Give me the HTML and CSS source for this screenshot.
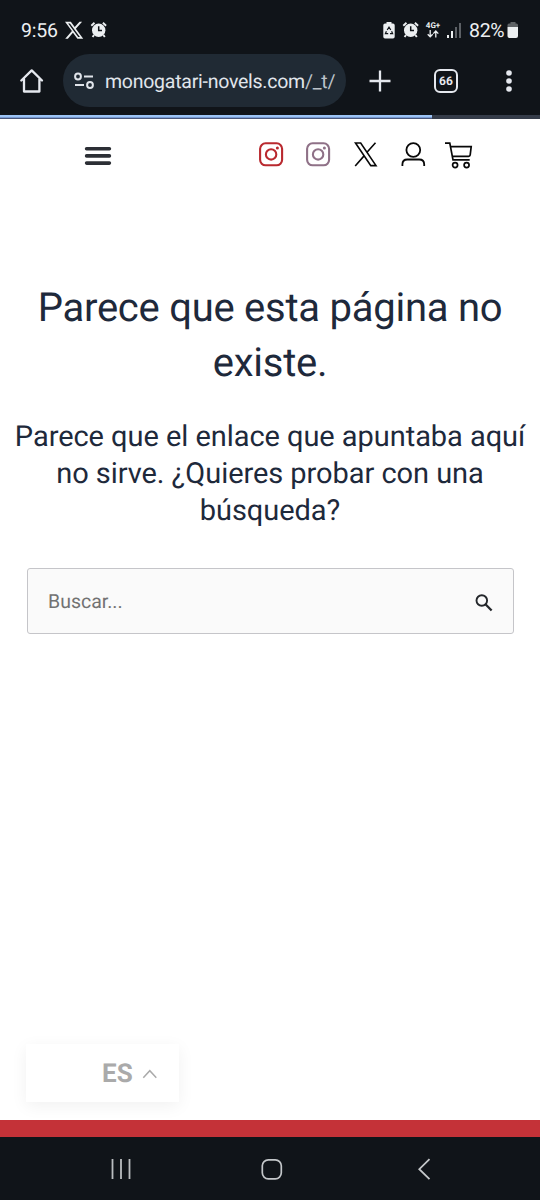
FILE: index.html
```html
<!DOCTYPE html>
<html lang="es">
<head>
<meta charset="utf-8">
<title>Monogatari Novels</title>
<link rel="stylesheet" href="styles.css">
</head>
<body>
<div class="screen">
  <header class="chrome">
    <div class="status">
      <span class="time">9:56</span>
      <svg class="st-x" width="18" height="18" viewBox="0 0 24 24"><path fill="#eceff1" fill-rule="evenodd" d="M0 1h7.800l5.200 7.100L19.300 1h3.500L14.500 10.400 24.300 23.500h-7.800l-5.900-7.800L3.800 23.500H.3l8.900-10.200ZM4.200 3.200l13.400 18.100h2.300L6.500 3.200Z"/></svg>
      <svg class="st-alarm" width="18" height="18" viewBox="0 0 18 18"><use href="#alarm"/></svg>
      <svg class="st-saver" width="12" height="17" viewBox="0 0 12 17"><path fill="#eceff1" d="M3.500 0h5v1.500H10q1.700 0 1.700 1.700v11.600q0 1.700-1.700 1.700H2Q.3 16.500.3 14.800V3.200Q.3 1.500 2 1.500h1.500Z"/><path d="M4.200 8 6 5.200 7.800 8M8.600 9.300l1 2.400H7M5.200 11.700H2.400l1-2.400" fill="none" stroke="#101419" stroke-width="1.200"/></svg>
      <svg class="st-alarm2" width="18" height="18" viewBox="0 0 18 18"><g id="alarm"><circle cx="8.700" cy="9.200" r="6.700" fill="#eceff1"/><path d="M1.300 4.800 4.500 1.800M12.900 1.800l3.200 3M4 14 2.600 16M13.400 14l1.400 2" stroke="#eceff1" stroke-width="1.900" fill="none"/><path d="M8.700 5.200v4.400H12" stroke="#101419" stroke-width="1.500" fill="none"/></g></svg>
      <span class="net"><span>4G+</span><svg width="12" height="8" viewBox="0 0 12 8"><path d="M3.200 0v6.500M.7 4.200l2.500 2.600 2.500-2.600M8.800 7.600V1.200M6.300 3.600 8.800 1l2.500 2.600" fill="none" stroke="#eceff1" stroke-width="1.300"/></svg></span>
      <svg class="st-signal" width="15" height="15" viewBox="0 0 15 15"><path fill="#eceff1" d="M0 12h2v3H0zM4 8h2v7H4z"/><path fill="#5c6065" d="M8 4h2v11H8zM12 0h2v15h-2z"/></svg>
      <span class="pct">82%</span>
      <svg class="st-batt" width="12" height="16" viewBox="0 0 12 16"><path fill="#5f6366" d="M3.500 0h5v1.500h1Q11 1.500 11 3v2H.5V3Q.5 1.500 2 1.500h1.500Z"/><path fill="#eceff1" d="M.5 5H11v9q0 2-2 2H2.500q-2 0-2-2Z"/></svg>
    </div>
    <div class="toolbar">
      <svg class="home" width="25" height="26" viewBox="0 0 25 26"><path d="M2.300 12.500 12.700 2.400l10.300 10.100M5 11v12.500h15.400V11" fill="none" stroke="#e5e8ee" stroke-width="2.300" stroke-linejoin="round" stroke-linecap="round"/></svg>
      <div class="omnibox">
        <svg width="20" height="18" viewBox="0 0 20 18" fill="none" stroke="#e0e4ea" stroke-width="2"><circle cx="4" cy="4.500" r="2.900"/><circle cx="16" cy="13" r="2.900"/><path d="M10 4.500h9M1 13h9"/></svg>
        <span class="url">monogatari-novels.com<span class="path">/_t/</span></span>
      </div>
      <svg class="plus" width="22" height="22" viewBox="0 0 22 22"><path d="M11 .5v21M.5 11h21" stroke="#e5e8ee" stroke-width="2.300"/></svg>
      <span class="tabs">66</span>
      <svg class="dots" width="6" height="22" viewBox="0 0 6 22" fill="#e5e8ee"><circle cx="3" cy="3" r="2.800"/><circle cx="3" cy="11" r="2.800"/><circle cx="3" cy="19" r="2.800"/></svg>
    </div>
    <div class="progress"><div class="progress-fill"></div></div>
  </header>

  <main class="page">
    <nav class="site-nav">
      <svg class="burger" width="27" height="20" viewBox="0 0 27 20"><path d="M2.600 2.700h22.800M2.600 9.900h22.800M2.600 17.100h22.800" stroke="#2c2f35" stroke-width="3.600" stroke-linecap="round"/></svg>
      <div class="links">
        <svg class="insta red" width="25" height="25" viewBox="0 0 25 25"><use href="#insta"/></svg>
        <svg class="insta mauve" width="25" height="25" viewBox="0 0 25 25"><g id="insta" fill="none" stroke="currentColor" stroke-width="2.100"><rect x="1.100" y="1.300" width="22" height="22" rx="5.500"/><circle cx="12.100" cy="12.400" r="5.200"/><circle cx="18.400" cy="6" r="1.500" fill="currentColor" stroke="none"/></g></svg>
        <svg class="x" width="24" height="25" viewBox="0 0 24 25"><path fill="none" stroke="#080808" stroke-width="1.600" d="M1.500 1h5.200L22 23.600h-5.200ZM21.500.8 13 10.300M10.300 13.600 1.200 24"/></svg>
        <svg class="user" width="25" height="25" viewBox="0 0 25 25" fill="none" stroke="#080808" stroke-width="1.800"><circle cx="12.300" cy="8" r="6.900"/><path d="M1.400 24v-1.500q0-5 5-5h11.800q5 0 5 5V24"/></svg>
        <svg class="cart" width="28" height="27" viewBox="0 0 28 27" fill="none" stroke="#080808" stroke-width="1.700"><path d="M0 1.200h4.800L8 17.900h16.700M5.700 4.600h20.500l-1 8.300q-.2 1.400-1.600 1.400H7.500"/><circle cx="10.100" cy="23.100" r="2.500"/><circle cx="21.600" cy="23.100" r="2.500"/></svg>
      </div>
    </nav>
    <h1 class="title">Parece que esta página no<br>existe.</h1>
    <p class="subtitle">Parece que el enlace que apuntaba aquí<br>no sirve. ¿Quieres probar con una<br>búsqueda?</p>
    <div class="search">
      <span>Buscar...</span>
      <svg width="18" height="18" viewBox="0 0 18 18" fill="none" stroke="#24272b"><circle cx="6.800" cy="6.500" r="5.300" stroke-width="1.900"/><path d="m10.500 10.300 6.100 6.200" stroke-width="2.300"/></svg>
    </div>
    <div class="lang">
      <span>ES</span>
      <svg width="16" height="10" viewBox="0 0 16 10"><path d="m1.300 8.700 6.500-7 6.500 7" fill="none" stroke="#aaa" stroke-width="1.500"/></svg>
    </div>
    <div class="footer-band"></div>
  </main>

  <div class="navbar">
    <svg class="recents" width="20" height="20" viewBox="0 0 20 20"><path d="M1.500 0v20M10 0v20M18.500 0v20" stroke="#b9bcbf" stroke-width="1.800"/></svg>
    <svg class="homekey" width="22" height="22" viewBox="0 0 22 22"><rect x="1.300" y=".8" width="19" height="19" rx="6" fill="none" stroke="#c4c7ca" stroke-width="1.700"/></svg>
    <svg class="back" width="13" height="22" viewBox="0 0 13 22"><path d="M11.500.2 1.300 10.200l10.200 10" fill="none" stroke="#c4c7ca" stroke-width="1.800"/></svg>
  </div>
</div>
</body>
</html>
```
FILE: styles.css
```css
* { box-sizing: border-box; }
body { margin: 0; font-family: Roboto, sans-serif; background: #fff; text-rendering: geometricPrecision; }
svg { display: block; flex: none; overflow: visible; }
.screen { width: 540px; height: 1200px; display: flex; flex-direction: column; overflow: hidden; }

.chrome { height: 119px; background: #101419; flex: none; }
.status { height: 52px; padding: 8px 0 0 21px; display: flex; align-items: center; color: #eceff1; white-space: nowrap; }
.time { width: 44px; font-size: 19.500px; letter-spacing: -.2px; }
.st-alarm { margin-left: 7px; }
.st-saver { margin-left: 275px; }
.st-alarm2 { margin-left: 7px; }
.net { width: 16px; margin-left: 5px; display: flex; flex-direction: column; align-items: center; font-size: 8px; line-height: 8px; font-weight: 700; }
.st-signal { margin-left: 6px; }
.pct { width: 38px; margin-left: 7px; font-size: 19.500px; letter-spacing: -.3px; }
.st-batt { margin-left: 0; }

.toolbar { height: 63px; display: flex; align-items: flex-start; padding: 2px 0 0 19px; }
.home { margin-top: 14px; }
.omnibox { width: 283px; height: 53px; margin-left: 19px; padding-left: 11px; border-radius: 27px; background: #202a34; display: flex; align-items: center; }
.url { margin: 1px 0 0 11px; font-size: 19.500px; letter-spacing: -.25px; color: #e1e6ec; white-space: nowrap; }
.path { color: #bcc3ca; }
.plus { margin: 16px 0 0 23px; }
.tabs { width: 24px; height: 24px; margin: 15px 0 0 43px; border: 2px solid #e5e8ee; border-radius: 6px; color: #e5e8ee; font-size: 12px; line-height: 20px; font-weight: 700; text-align: center; }
.dots { margin: 16px 0 0 48px; }
.progress { height: 4px; background: #353c49; }
.progress-fill { width: 432px; height: 4px; background: linear-gradient(#9cc4f5 0 2px, #7899d0 2px 3px, #4b587a 3px); }

.page { flex: 1; display: flex; flex-direction: column; background: #fff; }
.site-nav { height: 68px; padding: 23px 0 0 84px; display: flex; align-items: flex-start; }
.burger { margin-top: 4px; }
.links { margin-left: 148px; display: flex; align-items: flex-start; }
.red { color: #b9292f; }
.mauve { color: #8f7187; margin-left: 22px; }
.x { margin-left: 23px; }
.user { margin-left: 23px; }
.cart { margin-left: 19px; }

.title { margin: 93px 0 0; text-align: center; font-size: 40px; line-height: 55px; font-weight: 400; letter-spacing: -.25px; color: #1e293b; white-space: nowrap; }
.subtitle { margin: 29px 0 0; text-align: center; font-size: 29px; line-height: 37px; letter-spacing: -.05px; color: #1e293b; white-space: nowrap; }
.search { width: 487px; height: 66px; margin: 38px 0 0 27px; padding: 0 20px 0 20px; border: 1.500px solid #c5c5c9; border-radius: 3px; background: #fafafa; display: flex; align-items: center; justify-content: space-between; color: #727272; font-size: 19.500px; }
.search svg { margin-top: 3px; }
.lang { width: 153px; height: 58px; margin: auto 0 18px 26px; padding: 2px 0 0 76px; display: flex; align-items: center; background: #fff; box-shadow: 0 4px 16px rgba(0,0,0,.06); color: #aaa; font-size: 26px; font-weight: 700; }
.lang svg { margin-left: 9px; }
.footer-band { height: 17px; background: #c43238; }

.navbar { height: 63px; flex: none; background: #101419; display: flex; align-items: flex-start; padding: 22px 0 0 111px; }
.homekey { margin-left: 130px; }
.back { margin-left: 135px; }
```
